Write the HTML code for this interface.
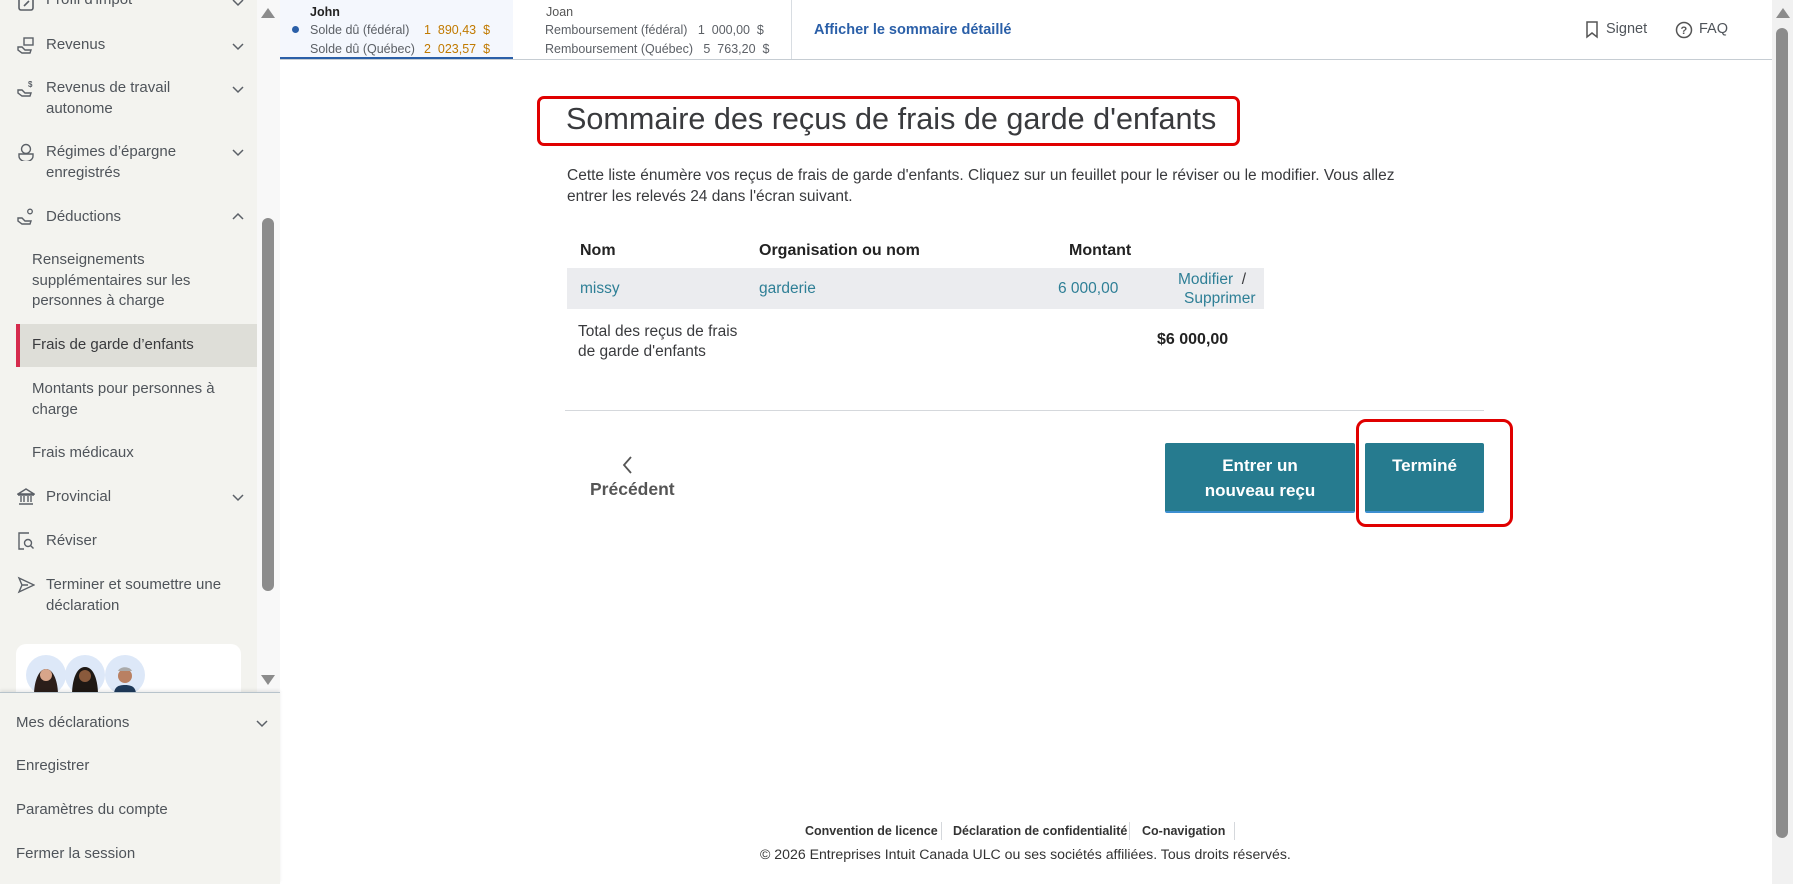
<!DOCTYPE html>
<html><head><meta charset="utf-8">
<style>
*{margin:0;padding:0;box-sizing:border-box}
body{width:1793px;height:884px;overflow:hidden;background:#fff;font-family:"Liberation Sans",sans-serif;position:relative;color:#393a3d}
.a{position:absolute;white-space:nowrap}
#side{position:absolute;left:0;top:0;width:257px;height:884px;background:#f3f3ef}
#sb{position:absolute;left:257px;top:0;width:23px;height:692px;background:#f8f8f8}
.nav{font-size:15px;color:#4f545a;line-height:20.5px}
.ico{position:absolute;left:17px;width:18px;height:18px}
.chev{position:absolute;left:232px;width:12px;height:12px}
#bottom{position:absolute;left:0;top:692px;width:280px;height:192px;background:#f3f3ef;border-top:1px solid #b7c3cb;box-shadow:0 -2px 3px rgba(0,0,0,.08)}
.hdr{font-size:12.5px;color:#5c6066}
.teal{color:#2e7f96}
.btn{position:absolute;background:#267b8f;color:#fff;font-weight:bold;font-size:17px;text-align:center;line-height:25px;border-radius:2px;border-bottom:2px solid #3d8fd1}
</style></head><body>
<div id="side"></div>
<div id="sb"></div>
<svg class="a" style="left:261px;top:8px" width="14" height="10"><path d="M7 0L14 10H0z" fill="#8c8c8c"/></svg>
<div class="a" style="left:262px;top:218px;width:12px;height:373px;background:#8c8c8c;border-radius:6px"></div>
<svg class="a" style="left:261px;top:675px" width="14" height="10"><path d="M0 0H14L7 10z" fill="#8c8c8c"/></svg>

<svg class="ico" style="top:-6px" viewBox="0 0 18 18"><rect x="2" y="2" width="14" height="14" rx="2" fill="none" stroke="#5b6067" stroke-width="1.6"/><path d="M7 12l5-5" stroke="#5b6067" stroke-width="1.6"/></svg>
<div class="a nav" style="left:46px;top:-10px">Profil d'impôt</div>
<svg class="chev" style="top:-4px" viewBox="0 0 12 12"><path d="M1 4l5 5 5-5" fill="none" stroke="#5b6067" stroke-width="1.5"/></svg>

<svg class="ico" style="top:37px" viewBox="0 0 18 18"><rect x="7" y="1" width="9" height="7" fill="none" stroke="#5b6067" stroke-width="1.4"/><path d="M1 10h4l3 3h6l-1 3H5L1 13z" fill="none" stroke="#5b6067" stroke-width="1.4"/></svg>
<div class="a nav" style="left:46px;top:35px">Revenus</div>
<svg class="chev" style="top:40px" viewBox="0 0 12 12"><path d="M1 4l5 5 5-5" fill="none" stroke="#5b6067" stroke-width="1.5"/></svg>

<svg class="ico" style="top:80px" viewBox="0 0 18 18"><text x="11" y="7" font-size="8" font-weight="bold" fill="#5b6067" font-family="Liberation Sans">$</text><path d="M1 10h4l3 3h6l-1 3H5L1 13z" fill="none" stroke="#5b6067" stroke-width="1.4"/></svg>
<div class="a nav" style="left:46px;top:78px">Revenus de travail<br>autonome</div>
<svg class="chev" style="top:83px" viewBox="0 0 12 12"><path d="M1 4l5 5 5-5" fill="none" stroke="#5b6067" stroke-width="1.5"/></svg>

<svg class="ico" style="top:143px" viewBox="0 0 18 18"><circle cx="9" cy="6" r="4.5" fill="none" stroke="#5b6067" stroke-width="1.4"/><path d="M2 11h14v2a5 4 0 0 1-14 0z" fill="none" stroke="#5b6067" stroke-width="1.4"/></svg>
<div class="a nav" style="left:46px;top:142px">Régimes d’épargne<br>enregistrés</div>
<svg class="chev" style="top:146px" viewBox="0 0 12 12"><path d="M1 4l5 5 5-5" fill="none" stroke="#5b6067" stroke-width="1.5"/></svg>

<svg class="ico" style="top:208px" viewBox="0 0 18 18"><circle cx="13" cy="3.5" r="2.3" fill="none" stroke="#5b6067" stroke-width="1.3"/><path d="M1 10h4l3 3h6l-1 3H5L1 13z" fill="none" stroke="#5b6067" stroke-width="1.4"/></svg>
<div class="a nav" style="left:46px;top:207px">Déductions</div>
<svg class="chev" style="top:211px" viewBox="0 0 12 12"><path d="M1 8l5-5 5 5" fill="none" stroke="#5b6067" stroke-width="1.5"/></svg>

<div class="a nav" style="left:32px;top:250px">Renseignements<br>supplémentaires sur les<br>personnes à charge</div>
<div class="a" style="left:16px;top:324px;width:241px;height:43px;background:#deded8;border-left:4px solid #d52b4d"></div>
<div class="a nav" style="left:32px;top:335px;color:#393a3d">Frais de garde d’enfants</div>
<div class="a nav" style="left:32px;top:379px">Montants pour personnes à<br>charge</div>
<div class="a nav" style="left:32px;top:443px">Frais médicaux</div>

<svg class="ico" style="top:488px" viewBox="0 0 18 18"><path d="M1 6L9 1l8 5z M2 16h14 M4 8v6 M7 8v6 M11 8v6 M14 8v6 M1 7h16" fill="none" stroke="#5b6067" stroke-width="1.4"/></svg>
<div class="a nav" style="left:46px;top:487px">Provincial</div>
<svg class="chev" style="top:491px" viewBox="0 0 12 12"><path d="M1 4l5 5 5-5" fill="none" stroke="#5b6067" stroke-width="1.5"/></svg>

<svg class="ico" style="top:532px" viewBox="0 0 18 18"><path d="M12 1H2v16h5" fill="none" stroke="#5b6067" stroke-width="1.4"/><circle cx="11" cy="11" r="3.5" fill="none" stroke="#5b6067" stroke-width="1.4"/><path d="M13.5 13.5l3 3" stroke="#5b6067" stroke-width="1.4"/></svg>
<div class="a nav" style="left:46px;top:531px">Réviser</div>

<svg class="ico" style="top:576px" viewBox="0 0 18 18"><path d="M2 2l15 7-15 7 3-7z M5 9h6" fill="none" stroke="#5b6067" stroke-width="1.4"/></svg>
<div class="a nav" style="left:46px;top:575px">Terminer et soumettre une<br>déclaration</div>

<div class="a" style="left:16px;top:644px;width:225px;height:60px;background:#fff;border-radius:10px"></div>
<svg class="a" style="left:26px;top:655px" width="120" height="40">
<circle cx="20" cy="20" r="20" fill="#dde8f8"/><circle cx="59" cy="20" r="20" fill="#dde8f8"/><circle cx="99" cy="20" r="20" fill="#dde8f8"/>
<path d="M8 40c0-12 4-26 12-26s12 14 12 26z" fill="#2b1e1a"/><circle cx="20" cy="20" r="6" fill="#d8a58a"/>
<path d="M46 40c0-14 4-28 13-28s13 14 13 28z" fill="#1e1814"/><circle cx="59" cy="21" r="6" fill="#8a5a3c"/>
<path d="M88 40c0-8 4-10 11-10s11 2 11 10z" fill="#1f3a5a"/><circle cx="99" cy="21" r="7" fill="#b98062"/><path d="M92 16c2-5 12-5 14 0" fill="#aaa"/>
</svg>

<div id="bottom">
<div class="a nav" style="left:16px;top:20px">Mes déclarations</div>
<svg class="chev" style="left:256px;top:24px" viewBox="0 0 12 12"><path d="M1 4l5 5 5-5" fill="none" stroke="#5b6067" stroke-width="1.5"/></svg>
<div class="a nav" style="left:16px;top:63px">Enregistrer</div>
<div class="a nav" style="left:16px;top:107px">Paramètres du compte</div>
<div class="a nav" style="left:16px;top:151px">Fermer la session</div>
</div>

<div class="a" style="left:280px;top:0;width:233px;height:60px;background:#f4f7fd;border-bottom:3px solid #2a5fa8"></div>
<div class="a" style="left:280px;top:59px;width:1492px;height:1px;background:#c6cdd3"></div>
<div class="a" style="left:791px;top:0;width:1px;height:59px;background:#d8dde2"></div>
<div class="a" style="left:310px;top:5px;font-size:12.5px;font-weight:bold;color:#222">John</div>
<div class="a" style="left:292px;top:26px;width:7px;height:7px;border-radius:50%;background:#2a5fa8"></div>
<div class="a hdr" style="left:310px;top:23px">Solde dû (fédéral)</div>
<div class="a hdr" style="left:310px;top:42px">Solde dû (Québec)</div>
<div class="a hdr" style="left:424px;top:23px;color:#c17a00">1&nbsp; 890,43&nbsp; $</div>
<div class="a hdr" style="left:424px;top:42px;color:#c17a00">2&nbsp; 023,57&nbsp; $</div>
<div class="a" style="left:546px;top:5px;font-size:12.5px;color:#555">Joan</div>
<div class="a hdr" style="left:545px;top:23px">Remboursement (fédéral)&nbsp;&nbsp; 1&nbsp; 000,00&nbsp; $</div>
<div class="a hdr" style="left:545px;top:42px">Remboursement (Québec)&nbsp;&nbsp; 5&nbsp; 763,20&nbsp; $</div>
<div class="a" style="left:814px;top:22px;font-size:14.5px;font-weight:bold;color:#2a5fa8">Afficher le sommaire détaillé</div>
<svg class="a" style="left:1585px;top:21px" width="14" height="18"><path d="M2 1h10v15l-5-4-5 4z" fill="none" stroke="#555" stroke-width="1.5"/></svg>
<div class="a" style="left:1606px;top:21px;font-size:14.5px;color:#4f545a">Signet</div>
<svg class="a" style="left:1674px;top:20px" width="20" height="20"><circle cx="10" cy="10" r="7.5" fill="none" stroke="#555" stroke-width="1.5"/><text x="6.5" y="14" font-size="11" font-weight="bold" fill="#555" font-family="Liberation Sans">?</text></svg>
<div class="a" style="left:1699px;top:21px;font-size:14.5px;color:#4f545a">FAQ</div>
<div class="a" style="left:1772px;top:0;width:21px;height:884px;background:#f1f1f1"></div>
<svg class="a" style="left:1776px;top:8px" width="14" height="10"><path d="M7 0L14 10H0z" fill="#8c8c8c"/></svg>
<div class="a" style="left:1776px;top:28px;width:12px;height:810px;background:#8c8c8c;border-radius:6px"></div>

<div class="a" style="left:537px;top:96px;width:703px;height:50px;border:3px solid #e00000;border-radius:7px"></div>
<div class="a" style="left:566px;top:102px;font-size:30.6px;color:#393a3d">Sommaire des reçus de frais de garde d'enfants</div>
<div class="a" style="left:567px;top:165px;font-size:15.5px;line-height:21px;color:#393a3d;white-space:normal;width:860px">Cette liste énumère vos reçus de frais de garde d'enfants. Cliquez sur un feuillet pour le réviser ou le modifier. Vous allez entrer les relevés 24 dans l'écran suivant.</div>
<div class="a" style="left:580px;top:242px;font-size:16px;font-weight:bold;color:#222">Nom</div>
<div class="a" style="left:759px;top:242px;font-size:16px;font-weight:bold;color:#222">Organisation ou nom</div>
<div class="a" style="left:1069px;top:242px;font-size:16px;font-weight:bold;color:#222">Montant</div>
<div class="a" style="left:567px;top:268px;width:697px;height:41px;background:#ebecef"></div>
<div class="a teal" style="left:580px;top:280px;font-size:15.5px">missy</div>
<div class="a teal" style="left:759px;top:280px;font-size:15.5px">garderie</div>
<div class="a teal" style="left:1058px;top:280px;font-size:15.5px">6 000,00</div>
<div class="a teal" style="left:1178px;top:271px;font-size:15.5px">Modifier&nbsp; <span style="color:#393a3d">/</span></div>
<div class="a teal" style="left:1184px;top:290px;font-size:15.5px">Supprimer</div>
<div class="a" style="left:578px;top:322px;font-size:15.5px;line-height:20px;color:#393a3d">Total des reçus de frais<br>de garde d'enfants</div>
<div class="a" style="left:1157px;top:331px;font-size:16px;font-weight:bold;color:#222">$6 000,00</div>
<div class="a" style="left:565px;top:410px;width:919px;height:1px;background:#d5d8dc"></div>
<svg class="a" style="left:620px;top:455px" width="14" height="20"><path d="M11 2L4 10l7 8" fill="none" stroke="#555" stroke-width="1.8"/></svg>
<div class="a" style="left:590px;top:479px;font-size:17.5px;font-weight:bold;color:#555">Précédent</div>
<div class="btn" style="left:1165px;top:443px;width:190px;height:70px;padding-top:10px">Entrer un<br>nouveau reçu</div>
<div class="btn" style="left:1365px;top:443px;width:119px;height:70px;padding-top:10px">Terminé</div>
<div class="a" style="left:1356px;top:419px;width:157px;height:108px;border:3px solid #e00000;border-radius:10px"></div>

<div class="a" style="left:805px;top:824px;font-size:12.5px;font-weight:bold;color:#333">Convention de licence</div>
<div class="a" style="left:941px;top:822px;width:1px;height:18px;background:#d5d8dc"></div>
<div class="a" style="left:953px;top:824px;font-size:12.5px;font-weight:bold;color:#333">Déclaration de confidentialité</div>
<div class="a" style="left:1129px;top:822px;width:1px;height:18px;background:#d5d8dc"></div>
<div class="a" style="left:1142px;top:824px;font-size:12.5px;font-weight:bold;color:#333">Co-navigation</div>
<div class="a" style="left:1234px;top:822px;width:1px;height:18px;background:#d5d8dc"></div>
<div class="a" style="left:760px;top:846px;font-size:14.1px;color:#333">© 2026 Entreprises Intuit Canada ULC ou ses sociétés affiliées. Tous droits réservés.</div>
</body></html>
